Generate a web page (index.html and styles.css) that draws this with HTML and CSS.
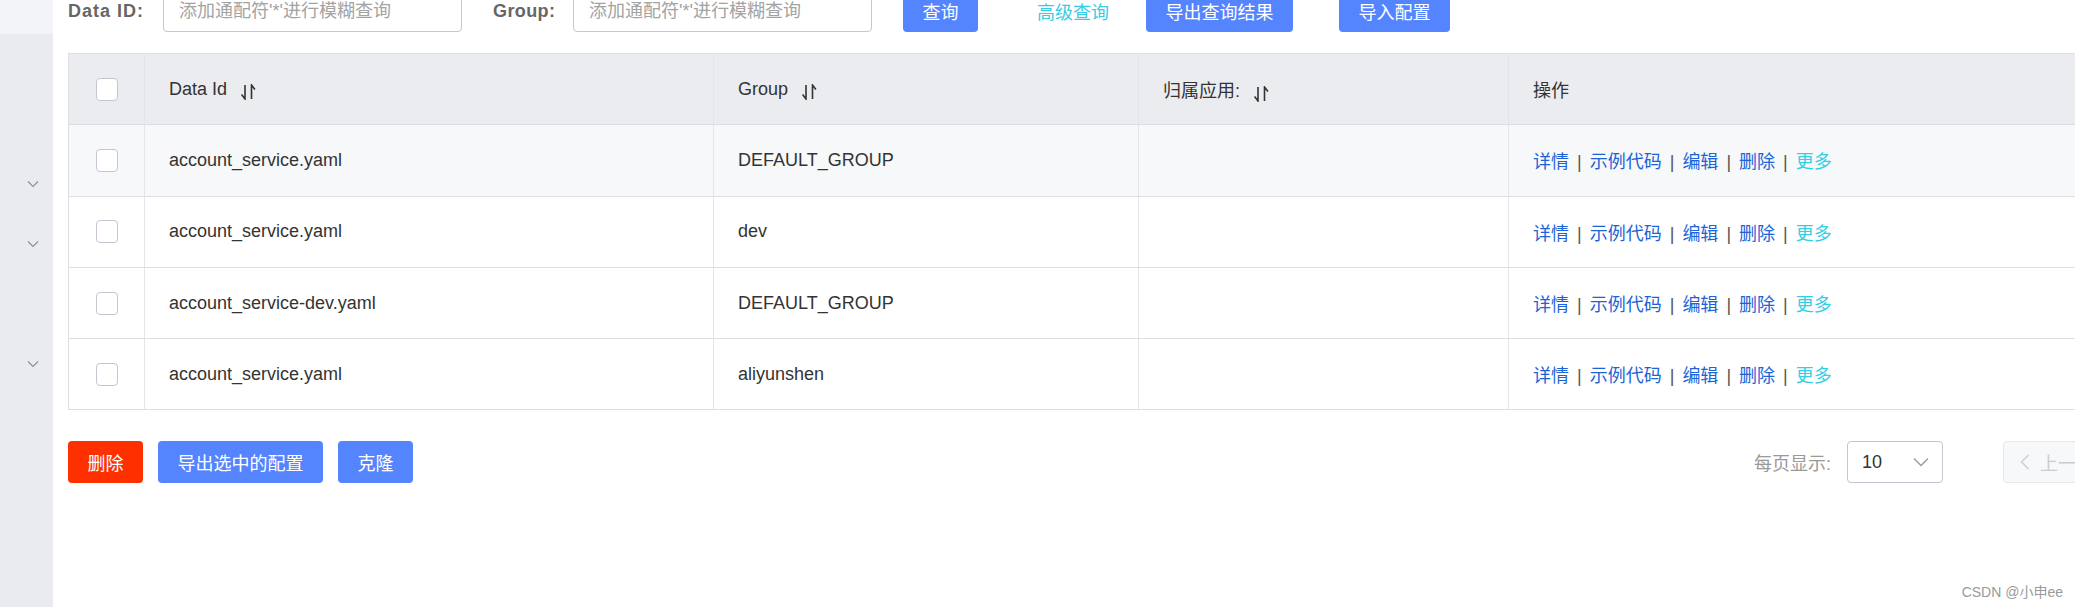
FILE: index.html
```html
<!DOCTYPE html>
<html lang="zh-CN">
<head>
<meta charset="utf-8">
<title>配置管理</title>
<link rel="stylesheet" href="styles.css">
</head>
<body>
<div class="page">
  <aside class="sidebar">
    <div class="side-top"></div>
    <div class="side-item"></div>
    <div class="side-item"></div>
    <div class="side-item"><svg class="chev" viewBox="0 0 12 8"><path d="M1 1.5L6 6.5L11 1.5" fill="none" stroke="#8a8f99" stroke-width="1.1"/></svg></div>
    <div class="side-item"><svg class="chev" viewBox="0 0 12 8"><path d="M1 1.5L6 6.5L11 1.5" fill="none" stroke="#8a8f99" stroke-width="1.1"/></svg></div>
    <div class="side-item"></div>
    <div class="side-item"><svg class="chev" viewBox="0 0 12 8"><path d="M1 1.5L6 6.5L11 1.5" fill="none" stroke="#8a8f99" stroke-width="1.1"/></svg></div>
  </aside>
  <main class="main">
    <div class="search">
      <span class="lbl lbl-id">Data ID:</span>
      <input class="field" type="text" placeholder="添加通配符'*'进行模糊查询">
      <span class="lbl lbl-group">Group:</span>
      <input class="field" type="text" placeholder="添加通配符'*'进行模糊查询">
      <button class="btn btn-query">查询</button>
      <span class="adv">高级查询</span>
      <button class="btn btn-export">导出查询结果</button>
      <button class="btn btn-import">导入配置</button>
    </div>

    <table class="grid">
      <colgroup>
        <col class="c-check">
        <col class="c-id">
        <col class="c-group">
        <col class="c-app">
        <col class="c-ops">
      </colgroup>
      <thead>
        <tr>
          <th class="cell-check"><span class="box"></span></th>
          <th>Data Id<svg class="sort" viewBox="0 0 16 16"><path d="M5 1V15L1.6 10.6M11.5 15V1L14.9 5.4" fill="none" stroke="#333" stroke-width="1.6"/></svg></th>
          <th>Group<svg class="sort" viewBox="0 0 16 16"><path d="M5 1V15L1.6 10.6M11.5 15V1L14.9 5.4" fill="none" stroke="#333" stroke-width="1.6"/></svg></th>
          <th>归属应用:<svg class="sort" viewBox="0 0 16 16"><path d="M5 1V15L1.6 10.6M11.5 15V1L14.9 5.4" fill="none" stroke="#333" stroke-width="1.6"/></svg></th>
          <th>操作</th>
        </tr>
      </thead>
      <tbody>
        <tr class="hover">
          <td class="cell-check"><span class="box"></span></td>
          <td>account_service.yaml</td>
          <td>DEFAULT_GROUP</td>
          <td></td>
          <td class="ops"><a class="lnk">详情</a><span class="sep">|</span><a class="lnk">示例代码</a><span class="sep">|</span><a class="lnk">编辑</a><span class="sep">|</span><a class="lnk">删除</a><span class="sep">|</span><a class="more">更多</a></td>
        </tr>
        <tr>
          <td class="cell-check"><span class="box"></span></td>
          <td>account_service.yaml</td>
          <td>dev</td>
          <td></td>
          <td class="ops"><a class="lnk">详情</a><span class="sep">|</span><a class="lnk">示例代码</a><span class="sep">|</span><a class="lnk">编辑</a><span class="sep">|</span><a class="lnk">删除</a><span class="sep">|</span><a class="more">更多</a></td>
        </tr>
        <tr>
          <td class="cell-check"><span class="box"></span></td>
          <td>account_service-dev.yaml</td>
          <td>DEFAULT_GROUP</td>
          <td></td>
          <td class="ops"><a class="lnk">详情</a><span class="sep">|</span><a class="lnk">示例代码</a><span class="sep">|</span><a class="lnk">编辑</a><span class="sep">|</span><a class="lnk">删除</a><span class="sep">|</span><a class="more">更多</a></td>
        </tr>
        <tr>
          <td class="cell-check"><span class="box"></span></td>
          <td>account_service.yaml</td>
          <td>aliyunshen</td>
          <td></td>
          <td class="ops"><a class="lnk">详情</a><span class="sep">|</span><a class="lnk">示例代码</a><span class="sep">|</span><a class="lnk">编辑</a><span class="sep">|</span><a class="lnk">删除</a><span class="sep">|</span><a class="more">更多</a></td>
        </tr>
      </tbody>
    </table>

    <div class="footer">
      <div class="actions">
        <button class="btn btn-danger">删除</button>
        <button class="btn">导出选中的配置</button>
        <button class="btn">克隆</button>
      </div>
      <div class="pager">
        <span class="pager-label">每页显示:</span>
        <div class="select"><span>10</span><svg class="sel-arrow" viewBox="0 0 16 10"><path d="M1 1.5L8 8.5L15 1.5" fill="none" stroke="#999" stroke-width="1.3"/></svg></div>
        <button class="pg pg-prev"><svg class="pg-arrow" viewBox="0 0 10 16"><path d="M8.5 1L1.5 8L8.5 15" fill="none" stroke="#ccc" stroke-width="1.3"/></svg>上一页</button>
        <button class="pg pg-num">1</button>
        <button class="pg pg-next">下一页</button>
      </div>
    </div>
  </main>
</div>
<div class="watermark">CSDN @小申ee</div>
</body>
</html>
```

FILE: styles.css
```css
* { box-sizing: border-box; }

html, body {
  margin: 0;
  padding: 0;
  background: #fff;
  overflow: hidden;
}

body {
  position: relative;
  width: 2075px;
  height: 607px;
  font-family: "Liberation Sans", "Noto Sans CJK SC", sans-serif;
  font-size: 18px;
  color: #333;
}

.page {
  display: flex;
  height: 607px;
}

/* sidebar */
.sidebar {
  flex: none;
  width: 53px;
  background: #e9ebf0;
  display: flex;
  flex-direction: column;
}
.side-top {
  height: 34px;
  background: #f3f4f7;
}
.side-item {
  height: 60px;
  display: flex;
  align-items: center;
  justify-content: center;
  padding-left: 12px;
}
.chev {
  width: 12px;
  height: 8px;
  display: block;
}

/* main */
.main {
  flex: none;
  width: 2227px;
  padding-left: 15px;
}

.search {
  display: flex;
  align-items: center;
  height: 42px;
  margin-top: -10px;
}
.lbl {
  font-weight: bold;
  color: #666;
  white-space: nowrap;
  letter-spacing: 0.4px;
}
.lbl-id { width: 95px; letter-spacing: 1px; }
.lbl-group { width: 80px; margin-left: 31px; }

.field {
  width: 299px;
  height: 42px;
  border: 1px solid #c4c6cf;
  border-radius: 4px;
  padding: 0 15px;
  font: inherit;
  color: #333;
  outline: none;
  background: #fff;
}
.field::placeholder { color: #a3a3a3; }

.btn {
  height: 42px;
  padding: 0 19.5px;
  border: none;
  border-radius: 4px;
  background: #5584ff;
  color: #fff;
  font: inherit;
  white-space: nowrap;
}
.btn-query { margin-left: 31px; }
.adv {
  color: #33cde5;
  margin-left: 59px;
  white-space: nowrap;
}
.btn-export { margin-left: 37px; }
.btn-import { margin-left: 46px; }

/* table */
.grid {
  margin-top: 21px;
  width: 2212px;
  table-layout: fixed;
  border-collapse: collapse;
  border-top: 1px solid #dcdee3;
  border-left: 1px solid #dcdee3;
}
.c-check { width: 76px; }
.c-id { width: 569px; }
.c-group { width: 425px; }
.c-app { width: 370px; }
.c-ops { width: 772px; }

.grid th,
.grid td {
  height: 71.3px;
  padding: 0 0 0 24px;
  text-align: left;
  font-weight: normal;
  color: #333;
  border-bottom: 1px solid #dcdee3;
  border-right: 1px solid #e4e5e9;
  white-space: nowrap;
}
.grid thead th { background: #ebecf0; }
.grid tr.hover td { background: #f7f8fa; }
.grid .cell-check {
  padding: 0;
  text-align: center;
}
.box {
  display: inline-block;
  width: 22px;
  height: 23px;
  border: 1px solid #c4c6cf;
  border-radius: 4px;
  background: #fff;
  vertical-align: middle;
}
.sort {
  width: 16px;
  height: 16px;
  margin-left: 13px;
  vertical-align: -5px;
}

.ops .lnk { color: #1e63d6; }
.ops .more { color: #33cde5; }
.ops .sep {
  color: #555;
  margin: 0 8px;
}

/* footer */
.footer {
  display: flex;
  justify-content: space-between;
  align-items: center;
  margin-top: 31px;
  height: 42px;
}
.actions {
  display: flex;
  gap: 15px;
}
.btn-danger { background: #ff3000; }

.pager {
  display: flex;
  align-items: center;
  margin-right: 21px;
}
.pager-label {
  color: #999;
  margin-right: 16px;
}
.select {
  width: 96px;
  height: 42px;
  border: 1px solid #c4c6cf;
  border-radius: 4px;
  display: flex;
  align-items: center;
  justify-content: space-between;
  padding: 0 13px 0 14px;
  color: #333;
}
.sel-arrow {
  width: 16px;
  height: 10px;
  display: block;
}
.pg {
  height: 42px;
  border: 1px solid #e6e7eb;
  border-radius: 4px;
  background: #f7f8fa;
  color: #ccc;
  font: inherit;
  padding: 0 16px;
  display: flex;
  align-items: center;
  white-space: nowrap;
}
.pg-prev { margin-left: 60px; }
.pg-num { margin-left: 8px; background: #5584ff; color: #fff; border-color: #5584ff; }
.pg-next { margin-left: 8px; }
.pg-arrow {
  width: 10px;
  height: 16px;
  margin-right: 10px;
}

.watermark {
  position: absolute;
  right: 12px;
  bottom: 6px;
  font-family: "Liberation Sans", "Noto Sans CJK SC", sans-serif;
  font-size: 14px;
  color: #9a9a9a;
}
```
